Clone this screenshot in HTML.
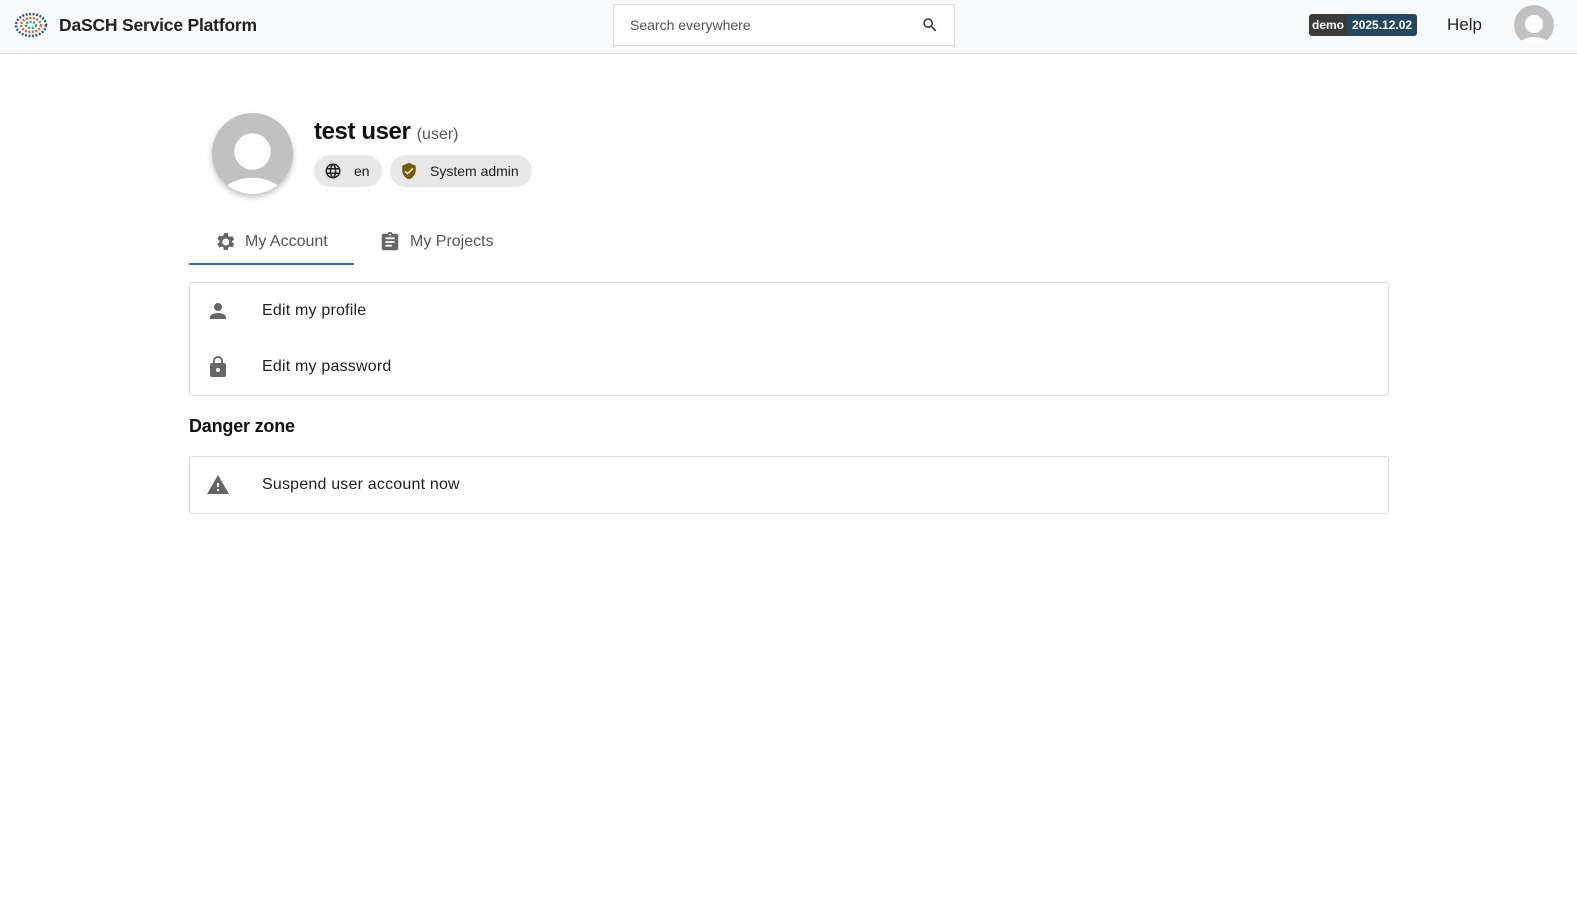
<!DOCTYPE html>
<html><head><meta charset="utf-8"><style>
*{box-sizing:border-box;margin:0;padding:0}
body{width:1577px;height:915px;background:#fff;font-family:"Liberation Sans",sans-serif;color:#1f1f1f;position:relative;overflow:hidden}
.hdr{position:absolute;left:0;top:0;width:1577px;height:54px;background:#f9fafc;border-bottom:1px solid #e2e2e2}
.abs{position:absolute}
.chip{position:absolute;height:32px;border-radius:16px;background:#e8e8e8;font-size:14px;display:flex;align-items:center}
.card{position:absolute;left:189px;width:1200px;border:1px solid #dcdcdc;border-radius:3px}
.row{position:absolute;left:0;display:flex;align-items:center;font-size:16px;letter-spacing:.2px}
</style></head><body>
<div class="hdr">
  <svg class="abs" style="left:14px;top:11px" width="34" height="28" viewBox="0 0 34 28"><g fill="none" stroke-width="2.5" stroke-dasharray="2 1.5"><ellipse cx="17" cy="14" rx="15" ry="11" stroke="#2a5a9a"/><ellipse cx="17" cy="14" rx="10" ry="7" stroke="#d06a3a"/><ellipse cx="17" cy="14" rx="5" ry="3" stroke="#3a9a8a"/></g></svg>
  <div class="abs" style="left:59px;top:15px;font-size:17.5px;font-weight:bold;color:#222;letter-spacing:-.2px">DaSCH Service Platform</div>
  <div class="abs" style="left:613px;top:4px;width:342px;height:42px;border:1px solid #ddd;background:#fff"></div>
  <div class="abs" style="left:630px;top:17px;font-size:14px;color:#555">Search everywhere</div>
  <svg class="abs" style="left:921px;top:16px" width="18" height="18" viewBox="0 0 24 24"><path fill="#333" d="M15.5 14h-.79l-.28-.27A6.47 6.47 0 0016 9.5 6.5 6.5 0 109.5 16c1.61 0 3.09-.59 4.23-1.57l.27.28v.79l5 4.99L20.49 19l-4.99-5zm-6 0C7.01 14 5 11.99 5 9.5S7.01 5 9.5 5 14 7.01 14 9.5 11.99 14 9.5 14z"/></svg>
  <div class="abs" style="left:1309px;top:14px;height:22px;border-radius:3px;overflow:hidden;display:flex;font-size:12px;font-weight:bold;color:#fff;line-height:22px">
    <span style="background:#3b3b3b;padding:0 3px">demo</span><span style="background:#24465f;padding:0 5px">2025.12.02</span></div>
  <div class="abs" style="left:1447px;top:15px;font-size:17px;color:#222">Help</div>
  <svg class="abs" style="left:1514px;top:5px" width="40" height="40" viewBox="0 0 40 40"><defs><clipPath id="c1"><circle cx="20" cy="20" r="20"/></clipPath></defs><circle cx="20" cy="20" r="20" fill="#c1c1c1"/><g clip-path="url(#c1)" fill="#fff"><circle cx="20" cy="19" r="9"/><ellipse cx="20" cy="42" rx="16" ry="10"/></g></svg>
</div>

<svg class="abs" style="left:212px;top:113px;filter:drop-shadow(0 3px 3px rgba(0,0,0,.25))" width="81" height="81" viewBox="0 0 40 40"><defs><clipPath id="c2"><circle cx="20" cy="20" r="20"/></clipPath></defs><circle cx="20" cy="20" r="20" fill="#c1c1c1"/><g clip-path="url(#c2)" fill="#fff"><circle cx="20" cy="19" r="9"/><ellipse cx="20" cy="42" rx="16" ry="10"/></g></svg>
<div class="abs" style="left:314px;top:118px;font-size:24px;font-weight:bold;color:#111;letter-spacing:-.4px">test user <span style="font-size:16px;font-weight:normal;color:#555;letter-spacing:0">(user)</span></div>
<div class="chip" style="left:314px;top:155px;width:68px">
  <svg style="margin-left:10px" width="18" height="18" viewBox="0 0 24 24"><path fill="#222" d="M12 2a10 10 0 100 20 10 10 0 000-20zm6.9 6h-2.9a15.6 15.6 0 00-1.4-3.6A8 8 0 0118.9 8zM12 4c.8 1.2 1.5 2.5 1.9 4h-3.8c.4-1.4 1.1-2.8 1.9-4zM4.3 14a8 8 0 010-4h3.4a16 16 0 000 4H4.3zm.8 2h3a15.6 15.6 0 001.4 3.6A8 8 0 015.1 16zm3-8h-3a8 8 0 014.3-3.6C8.8 5.6 8.4 6.8 8.1 8zM12 20c-.8-1.2-1.5-2.5-1.9-4h3.8c-.4 1.4-1.1 2.8-1.9 4zm2.3-6H9.7a14.7 14.7 0 010-4h4.7a14.7 14.7 0 010 4zm.3 5.6c.6-1.1 1.1-2.3 1.4-3.6h3a8 8 0 01-4.4 3.6zm1.8-5.6a16 16 0 000-4h3.4a8 8 0 010 4h-3.4z"/></svg>
  <span style="margin-left:12px">en</span></div>
<div class="chip" style="left:390px;top:155px;width:142px">
  <svg style="margin-left:10px" width="18" height="18" viewBox="0 0 24 24"><path fill="#7a5a00" d="M12 1L3 5v6c0 5.5 3.8 10.7 9 12 5.2-1.3 9-6.5 9-12V5l-9-4zm-2 16l-4-4 1.4-1.4L10 14.2l6.6-6.6L18 9l-8 8z"/></svg>
  <span style="margin-left:12px">System admin</span></div>

<svg class="abs" style="left:213px;top:230px" width="24" height="24" viewBox="0 0 24 24"><path fill="#666" d="M19.1 12.9a7 7 0 000-1.8l2.1-1.6-2-3.5-2.5 1a7 7 0 00-1.6-.9L14.8 3h-4l-.4 2.6c-.6.2-1.1.5-1.6.9l-2.5-1-2 3.5 2.1 1.6a7 7 0 000 1.8l-2.1 1.6 2 3.5 2.5-1c.5.4 1 .7 1.6.9l.4 2.6h4l.4-2.6c.6-.2 1.1-.5 1.6-.9l2.5 1 2-3.5-2.1-1.6zM12.8 15.5a3.5 3.5 0 110-7 3.5 3.5 0 010 7z"/></svg>
<div class="abs" style="left:245px;top:233px;font-size:16px;color:#555">My Account</div>
<div class="abs" style="left:189px;top:263px;width:165px;height:2px;background:#336790"></div>
<svg class="abs" style="left:379px;top:231px" width="22" height="22" viewBox="0 0 24 24"><path fill="#666" d="M19 3h-4.2C14.4 1.8 13.3 1 12 1s-2.4.8-2.8 2H5c-1.1 0-2 .9-2 2v14c0 1.1.9 2 2 2h14c1.1 0 2-.9 2-2V5c0-1.1-.9-2-2-2zm-7 0c.6 0 1 .4 1 1s-.4 1-1 1-1-.4-1-1 .4-1 1-1zm2 14H7v-2h7v2zm3-4H7v-2h10v2zm0-4H7V7h10v2z"/></svg>
<div class="abs" style="left:410px;top:233px;font-size:16px;color:#555">My Projects</div>

<div class="card" style="top:282px;height:114px">
  <div class="row" style="top:16px;height:24px">
    <svg style="margin-left:16px" width="24" height="24" viewBox="0 0 24 24"><path fill="#666" d="M12 12a4 4 0 100-8 4 4 0 000 8zm0 2c-2.7 0-8 1.3-8 4v2h16v-2c0-2.7-5.3-4-8-4z"/></svg>
    <span style="margin-left:32px">Edit my profile</span></div>
  <div class="row" style="top:72px;height:24px">
    <svg style="margin-left:16px" width="24" height="24" viewBox="0 0 24 24"><path fill="#666" d="M18 8h-1V6A5 5 0 007 6v2H6c-1.1 0-2 .9-2 2v10c0 1.1.9 2 2 2h12c1.1 0 2-.9 2-2V10c0-1.1-.9-2-2-2zm-6 9a2 2 0 110-4 2 2 0 010 4zm3.1-9H8.9V6a3.1 3.1 0 016.2 0v2z"/></svg>
    <span style="margin-left:32px">Edit my password</span></div>
</div>
<div class="abs" style="left:189px;top:416px;font-size:18px;font-weight:bold;color:#111;letter-spacing:-.2px">Danger zone</div>
<div class="card" style="top:456px;height:58px">
  <div class="row" style="top:16px;height:24px">
    <svg style="margin-left:16px" width="24" height="24" viewBox="0 0 24 24"><path fill="#666" d="M1 21h22L12 2 1 21zm12-3h-2v-2h2v2zm0-4h-2v-4h2v4z"/></svg>
    <span style="margin-left:32px">Suspend user account now</span></div>
</div>
</body></html>
